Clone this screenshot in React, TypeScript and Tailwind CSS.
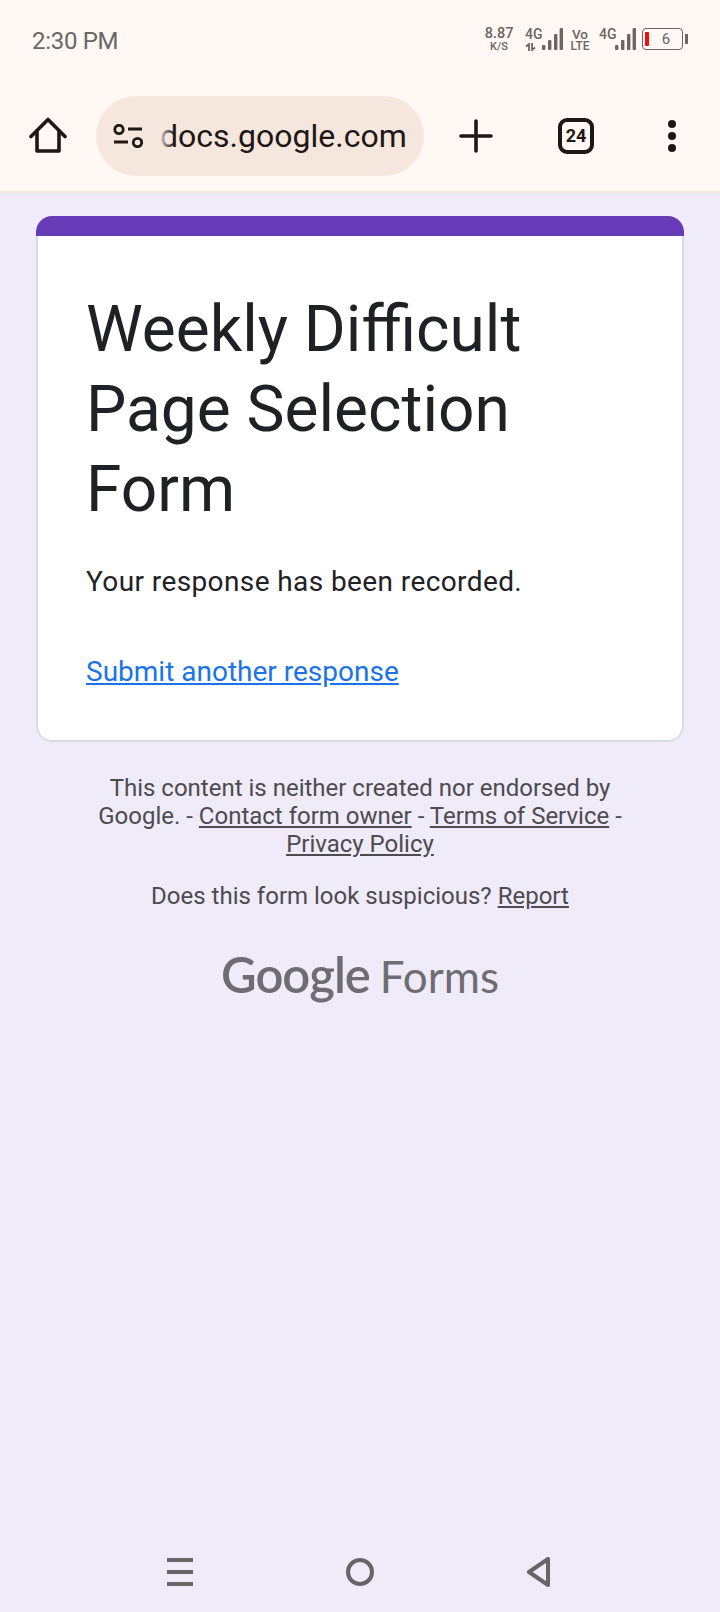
function Bars() {
  return (
    <svg className="absolute right-0 top-0" width="21" height="22" viewBox="0 0 21 22" fill="#6b6663">
      <rect x="0" y="17" width="3.4" height="5" rx="1" />
      <rect x="6" y="12" width="3.4" height="10" rx="1" />
      <rect x="12" y="6" width="3.4" height="16" rx="1" />
      <rect x="17.6" y="0" width="3.4" height="22" rx="1" />
    </svg>
  )
}

function StatusBar() {
  return (
    <div className="h-[84px] pt-[26px] pl-8 pr-8 flex items-start justify-between text-[#6b6663]">
      <span className="text-[24px] leading-[30px] tracking-[-0.3px]">2:30 PM</span>
      <div className="flex items-start pt-[2px] font-medium">
        <div className="w-[28px] mr-[12px] flex flex-col items-center -mt-[1px]">
          <span className="text-[14.5px] leading-[14px]">8.87</span>
          <span className="text-[11px] leading-[11px]">K/S</span>
        </div>
        <div className="relative w-[38px] h-[22px] mr-[7px]">
          <span className="absolute left-0 top-0 text-[14px] leading-[13px]">4G</span>
          <svg className="absolute left-0 top-[15px]" width="11" height="8" viewBox="0 0 11 8" fill="none" stroke="#6b6663" strokeWidth="1.8">
            <path d="M4 8V1L1 3.5" />
            <path d="M7 0V7L10 4.5" />
          </svg>
          <Bars />
        </div>
        <div className="w-[20px] mr-[9px] flex flex-col items-center">
          <span className="text-[13.5px] leading-[13px]">Vo</span>
          <span className="text-[12px] leading-[10px]">LTE</span>
        </div>
        <div className="relative w-[37px] h-[22px] mr-[6px]">
          <span className="absolute left-0 top-0 text-[14px] leading-[13px]">4G</span>
          <Bars />
        </div>
        <div className="flex items-center">
          <div className="relative w-[41px] h-[22px] rounded-[4px] border-[1.5px] border-[#6b6663] flex items-center justify-center pl-[7px]">
            <span className="absolute left-[2px] top-[3px] w-[3.5px] h-[14px] rounded-[1px] bg-[#f20d0d]" />
            <span className="text-[15px] leading-none font-normal">6</span>
          </div>
          <span className="ml-[2px] w-[3px] h-[10px] bg-[#6b6663]" />
        </div>
      </div>
    </div>
  )
}

function Toolbar() {
  return (
    <div className="h-[109px] border-b-2 border-[#f4e6de] flex items-start pt-[12px] text-[#1e1714]">
      <div className="w-[96px] h-[80px] flex items-center justify-center">
        <svg width="38" height="38" viewBox="0 0 38 38" fill="none" stroke="#1e1714" strokeWidth="3.6" strokeLinejoin="round" strokeLinecap="round">
          <path d="M2 19.5 19 2.5 36 19.5" />
          <path d="M8 14.5V34H30V14.5" />
        </svg>
      </div>
      <div className="relative w-[328px] h-[80px] rounded-[40px] bg-[#f5e6de] overflow-hidden flex items-center">
        <svg className="ml-[17px] shrink-0" width="30" height="24" viewBox="0 0 30 24" fill="none" stroke="#1e1714" strokeWidth="2.8">
          <circle cx="6" cy="5.5" r="4.2" />
          <path d="M15 5H29" />
          <path d="M1 18H15" />
          <circle cx="24.5" cy="18.5" r="4.2" />
        </svg>
        <span className="ml-[17px] text-[32px] leading-[40px] whitespace-nowrap">docs.google.com</span>
        <span className="absolute left-[62px] top-0 w-[16px] h-full bg-gradient-to-r from-[#f5e6de] to-transparent" />
      </div>
      <div className="w-[104px] h-[80px] flex items-center justify-center">
        <svg width="34" height="34" viewBox="0 0 34 34" fill="none" stroke="#1e1714" strokeWidth="3.6" strokeLinecap="round">
          <path d="M17 2V32M2 17H32" />
        </svg>
      </div>
      <div className="w-[96px] h-[80px] flex items-center justify-center">
        <div className="w-[36px] h-[36px] rounded-[9px] border-[4px] border-[#1e1714] flex items-center justify-center text-[18px] leading-none font-bold">24</div>
      </div>
      <div className="w-[96px] h-[80px] flex flex-col items-center justify-center gap-[4px]">
        <span className="w-[8px] h-[8px] rounded-full bg-[#1e1714]" />
        <span className="w-[8px] h-[8px] rounded-full bg-[#1e1714]" />
        <span className="w-[8px] h-[8px] rounded-full bg-[#1e1714]" />
      </div>
    </div>
  )
}

function FormCard() {
  return (
    <div className="mx-9 mt-[23px] rounded-[16px] bg-white overflow-hidden">
      <div className="h-[20px] bg-[#673ab7]" />
      <div className="border-2 border-t-0 border-[#dadce0] rounded-b-[16px] h-[506px] pl-[48px] pt-[54px]">
        <h1 className="text-[64px] leading-[80px] text-[#202124] font-normal">Weekly Difficult<br />Page Selection<br />Form</h1>
        <p className="mt-[34px] text-[28px] leading-[36px] tracking-[0.4px] text-[#202124]">Your response has been recorded.</p>
        <a className="block mt-[54px] text-[28px] leading-[36px] text-[#1a73e8] underline">Submit another response</a>
      </div>
    </div>
  )
}

function FormFooter() {
  return (
    <div className="mt-[32px] text-center text-[24px] leading-[28px] text-[#4d4a50]">
      <div><span>This content is neither created nor endorsed by</span></div>
      <div><span>Google. - </span><a className="underline">Contact form owner</a><span> - </span><a className="underline">Terms of Service</a><span> -</span></div>
      <div><a className="underline">Privacy Policy</a></div>
      <div className="mt-[24px]"><span>Does this form look suspicious? </span><a className="underline">Report</a></div>
      <div className="mt-[34px] flex items-baseline justify-center text-[#6e6d73] font-['Lato',sans-serif]">
        <span className="text-[49px] leading-[60px] font-semibold tracking-[-1px]">Google</span>
        <span className="ml-[10px] text-[44px] leading-[60px]">Forms</span>
      </div>
    </div>
  )
}

function NavBar() {
  return (
    <div className="mt-auto h-[80px] flex items-start gap-[153px] pt-[26px] pl-[167px]">
      <div className="w-[26px] h-[28px] flex flex-col justify-between">
        <span className="h-[4px] bg-[#666666]" />
        <span className="h-[4px] bg-[#666666]" />
        <span className="h-[4px] bg-[#666666]" />
      </div>
      <svg width="28" height="28" viewBox="0 0 28 28" fill="none" stroke="#666666" strokeWidth="4">
        <circle cx="14" cy="14" r="12" />
      </svg>
      <svg className="-mt-[1px]" width="23" height="30" viewBox="0 0 23 30" fill="none" stroke="#666666" strokeWidth="4" strokeLinejoin="round">
        <path d="M21 2V28L2 15Z" />
      </svg>
    </div>
  )
}

export default function App() {
  return (
    <div className="w-[720px] h-[1612px] flex flex-col bg-[#efebf9] font-['Roboto',sans-serif] overflow-hidden">
      <div className="bg-[#fff8f5]">
        <StatusBar />
        <Toolbar />
      </div>
      <FormCard />
      <FormFooter />
      <NavBar />
    </div>
  )
}
